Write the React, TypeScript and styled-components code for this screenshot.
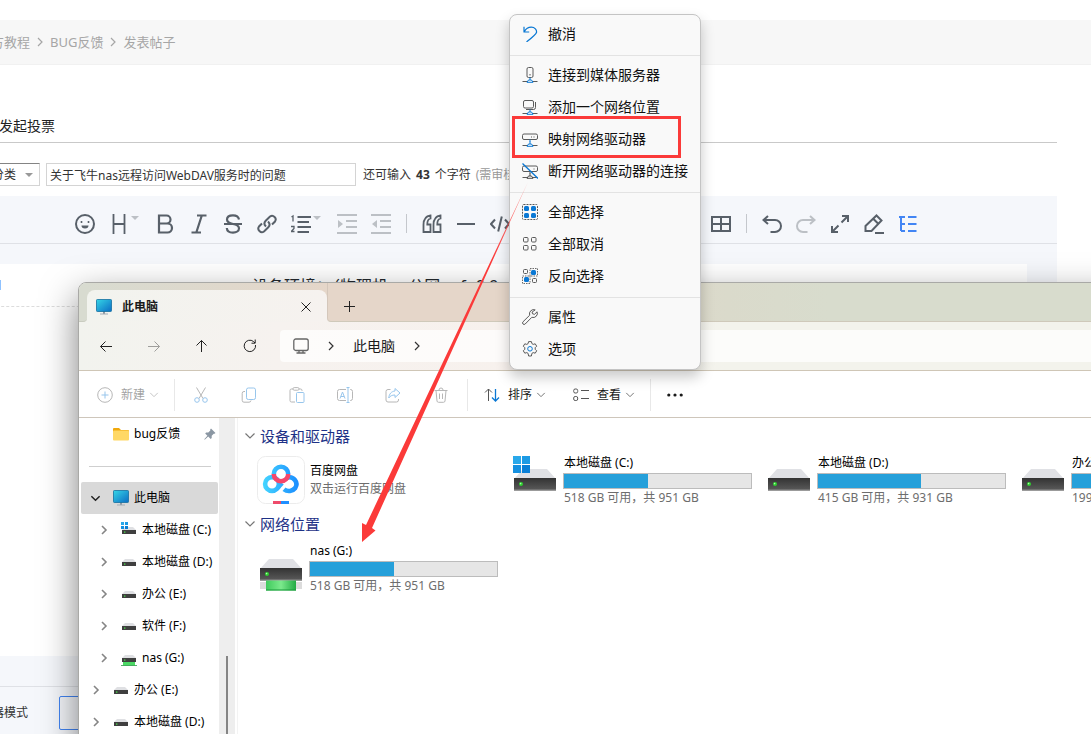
import React from "react";
import styled, { createGlobalStyle } from "styled-components";

const Global = createGlobalStyle`
  * { box-sizing: border-box; }
  body {
    margin: 0;
    background: #fff;
    overflow: hidden;
    font-family: "Noto Sans", "Noto Sans CJK SC", sans-serif;
    font-size: 12px;
    line-height: 16px;
    color: #1a1a1a;
  }
  button, input, select { font: inherit; color: inherit; }
  button { border: 0; padding: 0; margin: 0; background: none; text-align: left; }
  svg { display: block; flex: none; }
`;

/* ---------- forum page ---------- */

const Desktop = styled.div`
  position: relative;
  height: 100vh;
  overflow: hidden;
`;

const Forum = styled.main`
  display: flex;
  flex-direction: column;
  height: 100%;
  padding-top: 20px;
`;

const Crumbs = styled.nav`
  display: flex;
  align-items: center;
  gap: 4px;
  height: 45px;
  flex: none;
  margin-left: -24px;
  padding-left: 2px;
  background: #f7f7f7;
  border-bottom: 1px solid #f1f1f1;
  font-size: 13px;
  color: #a6a6a6;
  a { color: inherit; text-decoration: none; white-space: nowrap; }
`;

const PostForm = styled.form`
  flex: 1;
  display: flex;
  flex-direction: column;
  margin: 0 34px 0 -24px;
  min-height: 0;
`;

const PostTabs = styled.div`
  display: flex;
  align-items: flex-end;
  height: 78px;
  flex: none;
  padding: 0 0 7px 23px;
  border-bottom: 1px solid #c9c9c9;
  font-size: 14px;
  line-height: 18px;
  color: #222;
`;

const TitleRow = styled.div`
  display: flex;
  align-items: center;
  gap: 6px;
  padding: 20px 0 10px;
  color: #333;
`;

const CategoryBox = styled.label`
  position: relative;
  width: 64px;
  svg { position: absolute; right: 7px; top: 10px; }
`;

const Category = styled.select`
  appearance: none;
  display: block;
  width: 100%;
  height: 23px;
  padding: 0 0 0 15px;
  border: 1px solid #d4d4d4;
  border-top-color: #848484;
  border-radius: 0;
  background: #fff;
`;

const TitleInput = styled.input`
  width: 310px;
  height: 23px;
  padding: 0 3px;
  border: 1px solid #d4d4d4;
  background: #fff;
  outline: none;
`;

const Counter = styled.span`
  display: flex;
  gap: 5px;
  margin-left: 1px;
  white-space: nowrap;
  b { font-weight: 700; }
  small { font-size: 12px; color: #999; }
`;

const Tools = styled.div`
  display: flex;
  align-items: center;
  height: 48px;
  flex: none;
  padding: 8px 0 0 92px;
  background: #f5f7fb;
  border-bottom: 1px solid #dfe1e6;
`;

const Tool = styled.button<{ $wide?: boolean; $tone?: string }>`
  display: flex;
  align-items: center;
  gap: 2px;
  width: ${(p) => (p.$wide ? 46 : 34)}px;
  padding-left: 7px;
  height: 34px;
  color: ${(p) => p.$tone ?? "#586069"};
`;

const ToolRule = styled.i`
  width: 1px;
  height: 19px;
  margin: 0 8px;
  background: #c4c7cc;
`;

const ToolCaret = styled.span`
  align-self: flex-start;
  margin-top: 9px;
`;

const Canvas = styled.div`
  flex: 1;
  display: flex;
  min-height: 0;
  padding: 20px 30px 0 0;
  background: #f5f7fb;
`;

const Outline = styled.aside`
  width: 260px;
  background: #fff;
  header {
    height: 43px;
    padding: 16px 0 0 24px;
    border-bottom: 1px dashed #dcdcdc;
  }
`;

const OutlineMark = styled.i`
  display: block;
  width: 1px;
  height: 10px;
  background: #8fc2ff;
`;

const Doc = styled.article`
  flex: 1;
  padding: 10px 16px;
  background: #fff;
  font-size: 16px;
  line-height: 24px;
  color: #24292e;
  p { margin: 0; }
`;

const CountBar = styled.div`
  height: 31px;
  flex: none;
  background: #f5f7fb;
  border-bottom: 1px solid #dfe1e6;
`;

const FormFoot = styled.footer`
  display: flex;
  align-items: center;
  gap: 31px;
  height: 47px;
  flex: none;
  margin-left: -12px;
  padding: 4px 0 0 4px;
  background: #f5f7fb;
  color: #333;
`;

const ModeButton = styled.button`
  width: 90px;
  height: 34px;
  border: 1px solid #4285f4;
  border-radius: 2px;
`;

/* ---------- explorer window ---------- */

const WindowFrame = styled.div`
  position: absolute;
  left: 78px;
  right: -60px;
  top: 282px;
  bottom: -20px;
  display: flex;
  border-radius: 8px;
  box-shadow: 0 14px 36px rgba(0, 0, 0, 0.5);
`;

const Window = styled.section`
  flex: 1;
  display: flex;
  flex-direction: column;
  border: 1px solid #a9a9a6;
  border-radius: 8px;
  overflow: hidden;
  background: linear-gradient(90deg, #f2f3ee 0, #f6f2ef 200px, #f7f1ed 430px, #f3f3ec 650px);
`;

const Strip = styled.div`
  display: flex;
  height: 39px;
  flex: none;
`;

const StripEdge = styled.div`
  width: 8px;
  background: #d8dbd0;
  border-bottom: 1px solid #c9ccc0;
  border-bottom-right-radius: 4px;
`;

const TabWrap = styled.div`
  display: flex;
  width: 240px;
  padding-top: 7px;
  background: linear-gradient(90deg, #d8dbd0, #e5d6c9);
`;

const Tab = styled.div`
  flex: 1;
  display: flex;
  align-items: center;
  gap: 10px;
  padding: 1px 14px 0 9px;
  border-radius: 8px 8px 0 0;
  background: linear-gradient(90deg, #f2f3ee, #f6f2ef);
  font-weight: 600;
  button { margin-left: auto; }
`;

const StripRest = styled.div`
  flex: 1;
  display: flex;
  align-items: center;
  padding: 8px 0 0 15px;
  background: linear-gradient(90deg, #e5d6c9 180px, #dadacb 400px, #d8dccd 500px);
  border-bottom: 1px solid #cfc9ba;
  border-left: 1px solid #d4c7bb;
  border-bottom-left-radius: 4px;
`;

const NavRow = styled.div`
  display: flex;
  align-items: center;
  height: 49px;
  flex: none;
  padding-left: 3px;
  border-bottom: 1px solid #cfc6b6;
`;

const NavButton = styled.button<{ $off?: boolean }>`
  display: flex;
  justify-content: center;
  width: 48px;
  color: #222;
  opacity: ${(p) => (p.$off ? 0.4 : 1)};
`;

const Address = styled.div`
  flex: 1;
  display: flex;
  align-items: center;
  gap: 16px;
  height: 32px;
  margin: 0 8px 0 6px;
  padding-left: 13px;
  border-radius: 4px;
  background: rgba(255, 255, 255, 0.72);
  font-size: 14px;
`;

const Commands = styled.div`
  display: flex;
  align-items: center;
  height: 47px;
  flex: none;
  padding: 2px 0 0 18px;
  background: #fff;
  border-bottom: 1px solid #cec6bb;
`;

const Command = styled.button<{ $off?: boolean; $w?: number }>`
  display: flex;
  align-items: center;
  justify-content: ${(p) => (p.$w ? "flex-start" : "center")};
  gap: 8px;
  width: ${(p) => p.$w ?? 48}px;
  color: #1a1a1a;
  opacity: ${(p) => (p.$off ? 0.42 : 1)};
  span + svg { margin-left: -4px; }
`;

const CommandRule = styled.i<{ $l?: number; $r?: number }>`
  width: 1px;
  height: 32px;
  margin: 0 ${(p) => p.$r ?? 2}px 0 ${(p) => p.$l ?? 0}px;
  background: #e8e8e8;
`;

const Panes = styled.div`
  flex: 1;
  display: flex;
  min-height: 0;
  background: #fff;
`;

const Tree = styled.nav`
  width: 140px;
  flex: none;
  padding-left: 2px;
`;

const TreeRow = styled.button<{ $level: number; $on?: boolean }>`
  display: flex;
  align-items: center;
  width: 137px;
  height: 32px;
  padding-left: ${(p) => 9 + p.$level * 8}px;
  border-radius: 2px;
  background: ${(p) => (p.$on ? "#d9d9d9" : "transparent")};
  white-space: nowrap;
  color: #000;
`;

const TreeArrow = styled.span`
  width: 12px;
  margin-right: 11px;
`;

const TreeIcon = styled.span`
  width: 16px;
  margin-right: 5px;
`;

const TreePin = styled.span`
  margin-left: auto;
  margin-right: 2px;
`;

const TreeRule = styled.hr`
  height: 1px;
  margin: 16px 8px 15px;
  border: 0;
  background: #cfcfcf;
`;

const Scroll = styled.div`
  width: 16px;
  flex: none;
  padding: 238px 7px 0;
  background: #eee;
  i { display: block; width: 2px; height: 100%; background: #858585; }
`;

const Files = styled.div`
  flex: 1;
  margin-left: 2px;
  padding: 4px 0 0 6px;
  border-left: 1px solid #f3f3f3;
`;

const Group = styled.h2`
  display: flex;
  align-items: center;
  gap: 4px;
  height: 28px;
  margin: 0;
  font-size: 15px;
  font-weight: 400;
  color: #1e3287;
`;

const Tiles = styled.div`
  display: flex;
  height: 60px;
  padding-left: 13px;
`;

const Tile = styled.div`
  display: flex;
  align-items: center;
  gap: 5px;
  width: 254px;
  flex: none;
  white-space: nowrap;
`;

const TileIcon = styled.div`
  display: flex;
  justify-content: center;
  width: 48px;
  flex: none;
`;

const TileText = styled.div<{ $loose?: boolean }>`
  line-height: ${(p) => (p.$loose ? 18 : 16)}px;
  color: #000;
  small { display: block; font-size: 12px; color: #6d6d6d; }
`;

const Meter = styled.div`
  width: 189px;
  height: 16px;
  margin: 2px 0 1px -1px;
  border: 1px solid #bcbcbc;
  background: #e6e6e6;
  i { display: block; height: 100%; background: #26a0da; }
`;

/* ---------- context menu ---------- */

const Menu = styled.ul`
  position: absolute;
  left: 509px;
  top: 14px;
  width: 192px;
  margin: 0;
  padding: 3px 0 4px;
  list-style: none;
  border: 1px solid #c4c4c4;
  border-radius: 8px;
  background: #f9f9f9;
  box-shadow: 0 7px 14px rgba(0, 0, 0, 0.22);
  font-size: 14px;
`;

const MenuItem = styled.button`
  display: flex;
  align-items: center;
  gap: 10px;
  width: 100%;
  height: 32px;
  padding-left: 12px;
  white-space: nowrap;
  color: #111;
`;

const MenuRule = styled.li`
  height: 1px;
  margin: 5px 0 3px;
  background: #e3e3e3;
`;

/* ---------- annotations ---------- */

const Highlight = styled.div`
  position: absolute;
  left: 512px;
  top: 116px;
  width: 169px;
  height: 42px;
  border: 3px solid #fb3a39;
`;

const Pointer = styled.svg`
  position: absolute;
  left: 360px;
  top: 180px;
`;

/* ---------- icons ---------- */

type IconProps = { children: React.ReactNode; size?: number; sw?: number };

const Glyph = ({ children, size = 20, sw = 2 }: IconProps) => (
  <svg width={size} height={size} viewBox={`0 0 ${size} ${size}`} fill="none" stroke="currentColor" strokeWidth={sw} aria-hidden>
    {children}
  </svg>
);

const Chevron = ({ dir, size = 12, color = "#777", sw = 1.2 }: { dir: "right" | "down"; size?: number; color?: string; sw?: number }) => (
  <svg width={size} height={size} viewBox="0 0 12 12" fill="none" stroke={color} strokeWidth={sw} aria-hidden>
    <path d={dir === "right" ? "M4 2l4 4-4 4" : "M1.500 3.500l4.500 4.500 4.500-4.500"} />
  </svg>
);

const Caret = ({ color }: { color: string }) => (
  <svg width="8" height="4" viewBox="0 0 8 4" fill={color} aria-hidden>
    <path d="M0 0h8L4 4z" />
  </svg>
);

const Monitor = () => (
  <svg width="16" height="16" viewBox="0 0 16 16" aria-hidden>
    <defs>
      <linearGradient id="screen" x1="0" y1="0" x2="1" y2="1">
        <stop offset="0" stopColor="#35d6e6" />
        <stop offset="1" stopColor="#0b6cc4" />
      </linearGradient>
    </defs>
    <path d="M7 12h2v3H7z" fill="#8d98a3" />
    <path d="M4 14.500h8v1H4z" fill="#a3adb6" />
    <rect x="0.500" y="0.500" width="15" height="12" rx="0.800" fill="url(#screen)" stroke="#14709f" strokeWidth="0.800" />
  </svg>
);

const WinLogo = ({ x, y, s }: { x: number; y: number; s: number }) => {
  const q = (s - 1) / 2;
  return (
    <g>
      <rect x={x} y={y} width={q} height={q} fill="#29a8ea" />
      <rect x={x + q + 1} y={y} width={q} height={q} fill="#1c9ae4" />
      <rect x={x} y={y + q + 1} width={q} height={q} fill="#1590e0" />
      <rect x={x + q + 1} y={y + q + 1} width={q} height={q} fill="#0a7fd6" />
    </g>
  );
};

const MiniDrive = ({ win, net }: { win?: boolean; net?: boolean }) => (
  <svg width="16" height="16" viewBox="0 0 16 16" aria-hidden>
    <path d="M4 5h8l3 3H1z" fill="#dfe0e3" />
    <rect x="1" y="8" width="14" height="4" fill="#3f3f3f" />
    <rect x="3" y="9.500" width="1.400" height="1.200" fill="#4be34b" />
    {win && <WinLogo x={0} y={0} s={7} />}
    {net && (
      <>
        <rect x="2" y="12" width="12" height="3.500" fill="#4bd964" />
        <path d="M0 15.500h16" stroke="#2c9b46" strokeWidth="0.800" />
      </>
    )}
  </svg>
);

const Drive = ({ win, net }: { win?: boolean; net?: boolean }) => (
  <svg width="44" height={net ? 46 : 48} viewBox={net ? "0 1 44 46" : "0 0 44 48"} aria-hidden>
    <defs>
      <linearGradient id="face" x1="0" y1="0" x2="0" y2="1">
        <stop offset="0" stopColor="#333" />
        <stop offset="1" stopColor="#5b5b5b" />
      </linearGradient>
      <linearGradient id="pipe" x1="0" y1="0" x2="1" y2="0">
        <stop offset="0" stopColor="#3fca5c" />
        <stop offset="0.500" stopColor="#7be98c" />
        <stop offset="1" stopColor="#23ab45" />
      </linearGradient>
    </defs>
    <g transform={net ? "translate(0 2)" : undefined}>
      <path d="M10 13h24l9 10H1z" fill="#e0e1e5" />
      <rect x="1" y="22" width="42" height="12.500" fill="url(#face)" />
      <rect x="1" y="33.500" width="42" height="1" fill="#8a8a8a" />
      <circle cx="8" cy="28" r="2" fill="#2fd02f" />
      <circle cx="7.600" cy="27.600" r="0.800" fill="#aaffaa" />
    </g>
    {net && (
      <>
        <rect x="1" y="38" width="42" height="7" fill="#dcdcdc" />
        <rect x="7" y="36.500" width="30" height="10" fill="url(#pipe)" />
        <path d="M7 46h30" stroke="#189a3a" />
      </>
    )}
    {win && <WinLogo x={0} y={0} s={17} />}
  </svg>
);

const BaiduIcon = () => (
  <svg width="48" height="48" viewBox="0 0 48 48" fill="none" aria-hidden>
    <defs>
      <linearGradient id="cloud" x1="6" y1="0" x2="42" y2="0" gradientUnits="userSpaceOnUse">
        <stop offset="0" stopColor="#45d5ff" />
        <stop offset="1" stopColor="#1a8cff" />
      </linearGradient>
    </defs>
    <rect x="0.500" y="0.500" width="47" height="47" rx="8" fill="#fff" stroke="#ececec" />
    <g stroke="url(#cloud)" strokeWidth="4.600">
      <circle cx="15" cy="28" r="6.900" />
      <path d="M27 33.200c3.500 3 8.800 2 11.200-1.200a6.900 6.900 0 0 0-8-10.300" />
      <path d="M16.800 18a7.200 7.200 0 0 1 14.400 0" />
      <path d="M20.500 32l4.500-5" />
    </g>
    <path d="M16.800 18a7.200 7.200 0 0 0 14.400 0" stroke="#f5476c" strokeWidth="4.600" />
    <rect x="16" y="45" width="8" height="3" fill="#ee4b6b" />
    <rect x="24" y="45" width="8" height="3" fill="#1f8fff" />
  </svg>
);

const Folder = () => (
  <svg width="16" height="16" viewBox="0 0 16 16" aria-hidden>
    <path d="M0 3a1 1 0 0 1 1-1h5l2 2h7a1 1 0 0 1 1 1v3H0z" fill="#f0a80c" />
    <rect x="0" y="4.500" width="16" height="10" rx="1" fill="#ffd865" />
  </svg>
);

const Pin = () => (
  <svg width="12" height="12" viewBox="0 0 12 12" fill="#8b97a3" aria-hidden>
    <path d="M7 .5l4.500 4.500-1 .8-.8-.1-2 2.100v2.200l-1 .9-2.500-2.400L1 11.500.3 11.700l.2-.8 2.900-3.100L1.200 5.500l.9-1h2.200l2-2L6.200 1.400z" />
  </svg>
);

const I = {
  smile: <Glyph><circle cx="10" cy="10" r="9" /><path d="M6.500 7v2M13.500 7v2" strokeWidth="1.600" /><path d="M6.500 11.500h7a3.500 3 0 0 1-7 0z" fill="currentColor" stroke="none" /></Glyph>,
  head: <Glyph sw={1.8}><path d="M4.500 0v20M15.500 0v20M4.500 10h11" /></Glyph>,
  bold: <Glyph sw={2.2}><path d="M4 1.500h7.500a4 4 0 0 1 0 8H4zM4 9.500h8.500a4.500 4.500 0 0 1 0 9H4zM4 1v18" /></Glyph>,
  italic: <Glyph sw={2.2}><path d="M8 1.500h9.500M2.500 18.500H12M12.800 1.500l-5.500 17" /></Glyph>,
  strike: <Glyph sw={2.2}><path d="M16 5.500c-.5-3-3-4.200-6-4.200-4 0-6 2-6 4.300 0 2.900 3 3.800 6 4.400 3.500.7 6 1.700 6 4.300s-2.500 4.400-6 4.400c-3.500 0-6-1.700-6.200-4.700M1 10h18" /></Glyph>,
  link: <Glyph><path d="M9 12.500c-2-2-1.800-4.300-.3-5.800L13 2.500a3.600 3.600 0 0 1 5 5l-3 3M11 7.500c2 2 1.800 4.300.3 5.800L7 17.500a3.600 3.600 0 0 1-5-5l3-3" /></Glyph>,
  list: <Glyph><path d="M6.500 3H20M6.500 8H18M6.500 13H20M6.500 18H18" strokeWidth="1.800" /><path d="M.5 3l1.500-1v5.500M0 12.500h3v2L.3 17.500H3.500" strokeWidth="1.300" /></Glyph>,
  indent: <Glyph><path d="M0 1h20M9 7h11M9 13h11M0 19h20" /><path d="M1 6v8l5-4z" fill="currentColor" stroke="none" /></Glyph>,
  outdent: <Glyph><path d="M0 1h20M9 7h11M9 13h11M0 19h20" /><path d="M6 6v8l-5-4z" fill="currentColor" stroke="none" /></Glyph>,
  quote: <Glyph><path d="M8.500 1.500C3.500 2 1.500 6 1.500 11v7h7v-7.500H5.300C5.200 7 6.500 5 8.500 4.500zM18.500 1.500c-5 .5-7 4.500-7 9.500v7h7v-7.500h-3.200c-.1-3.500 1.200-5.500 3.200-6z" strokeWidth="1.800" /></Glyph>,
  line: <Glyph><path d="M1 10h18" /></Glyph>,
  code: <Glyph><path d="M5 5.500L1 10l4 4.500M15 5.500l4 4.500-4 4.500M11.800 2.500l-3.600 15" /></Glyph>,
  plus: <Glyph><path d="M10 3v14M3 10h14" /></Glyph>,
  table: <Glyph><rect x="1" y="3" width="18" height="14" /><path d="M1 10h18M10 3v14" /></Glyph>,
  undo: <Glyph><path d="M6 2L1.500 6 6 10M1.500 6H13a6 6 0 0 1 0 12H8.500" /></Glyph>,
  redo: <Glyph><path d="M14 2l4.500 4L14 10M18.500 6H7a6 6 0 0 0 0 12h4.500" /></Glyph>,
  full: <Glyph><path d="M12 2h6v6M18 2l-6.500 6.500M8 18H2v-6M2 18l6.500-6.500" /></Glyph>,
  edit: <Glyph><path d="M12.500 1.500l5 5L7.500 17H1.500v-5zM9.500 5l5 5M11 19h9" /></Glyph>,
  toc: <Glyph><path d="M1 3h6M3 3v14M3 10h4M3 17h4M10 3h8.500M10 10h8.500M10 17h8.500" /></Glyph>,
};

const blue = "#0a78d4";
const MIcon = ({ children }: { children: React.ReactNode }) => (
  <svg width="16" height="16" viewBox="0 0 16 16" fill="none" stroke="#5a5a5a" strokeWidth="1" aria-hidden>
    {children}
  </svg>
);
const NetFoot = ({ c = blue }: { c?: string }) => (
  <>
    <path d="M.5 14.500H5M11 14.500h4.500" />
    <path d="M5 15.300l1.500-2.300h3l1.500 2.300zM8 10.500V13" stroke={c} />
  </>
);
const M = {
  undo: <MIcon><path d="M2 .8v5.200h5.200M2.300 5.700C4 2.500 6.500 1.200 9.300 1.200c3.500 0 5.700 2.700 5.200 5.300C14 8.500 9.500 12 4.500 16" stroke={blue} strokeWidth="1.200" /></MIcon>,
  media: <MIcon><rect x="5" y=".5" width="6" height="10" rx="1.500" /><path d="M8 7v1.500" /><NetFoot /></MIcon>,
  place: <MIcon><rect x="1.500" y="1.500" width="10" height="7.500" rx="1.500" /><path d="M13.500 3v5.500a2 2 0 0 1-2 2H4" /><NetFoot /></MIcon>,
  map: <MIcon><rect x=".5" y="3" width="15" height="5.500" rx="1.500" /><path d="M12 5.500v1M9.500 5.500v1" /><path d="M8 8.500V11" stroke={blue} /><NetFoot /></MIcon>,
  cut: <MIcon><rect x=".5" y="3" width="15" height="5.500" rx="1.500" /><path d="M12 5.500v1M8 8.500V11" /><NetFoot c="#4a4a4a" /><path d="M.5.500l15.500 15" stroke={blue} strokeWidth="1.300" /></MIcon>,
  all: <MIcon><rect x=".5" y=".5" width="15" height="15" rx="1" strokeDasharray="2 1" /><g fill={blue} stroke="none"><rect x="2" y="2" width="5" height="5" rx="1.500" /><rect x="9" y="2" width="5" height="5" rx="1.500" /><rect x="2" y="9" width="5" height="5" rx="1.500" /><rect x="9" y="9" width="5" height="5" rx="1.500" /></g></MIcon>,
  none: <MIcon><rect x="1.500" y="1.500" width="4.500" height="4.500" rx="1" /><rect x="9.500" y="1.500" width="4.500" height="4.500" rx="1" /><rect x="1.500" y="9.500" width="4.500" height="4.500" rx="1" /><rect x="9.500" y="9.500" width="4.500" height="4.500" rx="1" /></MIcon>,
  invert: <MIcon><rect x="1.500" y="1.500" width="4" height="4" rx="1" /><rect x="10.500" y="10.500" width="4" height="4" rx="1" /><path d="M8 .5h7.500v7.500H8zM.5 8H8v7.500H.5z" strokeDasharray="1.500 1" strokeWidth=".9" /><rect x="9" y="2" width="5" height="5" rx="1.500" fill={blue} stroke="none" /><rect x="2" y="9" width="5" height="5" rx="1.500" fill={blue} stroke="none" /></MIcon>,
  wrench: <MIcon><path d="M13.200.9a4.200 4.200 0 0 0-5.500 5.300L1 12.800a1.500 1.500 0 0 0 2.200 2.200l6.600-6.700a4.200 4.200 0 0 0 5.300-5.500l-2.600 2.500-2-.5-.4-1.800z" /></MIcon>,
  gear: <MIcon><path d="M6.600.6h2.800l.5 2 1.300.8 2-.6 1.500 2.400-1.500 1.500v1.600l1.500 1.500-1.500 2.400-2-.6-1.300.8-.5 2.600H6.600l-.5-2.600-1.300-.8-2 .6-1.500-2.400 1.500-1.500V6.700L1.300 5.200l1.500-2.400 2 .6 1.300-.8z" strokeLinejoin="round" /><circle cx="8" cy="7.800" r="2.300" stroke={blue} /></MIcon>,
};

const CIcon = ({ children }: { children: React.ReactNode }) => (
  <svg width="16" height="16" viewBox="0 0 16 16" fill="none" stroke="#555" strokeWidth="1" aria-hidden>
    {children}
  </svg>
);
const C = {
  add: <CIcon><circle cx="8" cy="8" r="7.300" /><path d="M8 4.500v7M4.500 8h7" stroke={blue} /></CIcon>,
  cut: <CIcon><path d="M3.500.5l6.500 11M12.500.5L6 11.500" /><circle cx="4" cy="13" r="2.300" stroke={blue} /><circle cx="12" cy="13" r="2.300" stroke={blue} /></CIcon>,
  copy: <CIcon><path d="M4 4.500H3A1.800 1.800 0 0 0 1.200 6.300v7A1.800 1.800 0 0 0 3 15.200h5a2 2 0 0 0 2-1.700" /><rect x="5.500" y="1" width="9" height="11.500" rx="1.800" stroke={blue} /></CIcon>,
  paste: <CIcon><path d="M4 2H2.500A1.500 1.500 0 0 0 1 3.500v10A1.500 1.500 0 0 0 2.500 15H6M10 2h1.500A1.500 1.500 0 0 1 13 3.500V4" /><rect x="4" y=".6" width="6" height="2.600" rx="1.200" /><rect x="7.500" y="5.500" width="7.500" height="10" rx="1" stroke={blue} /></CIcon>,
  rename: <CIcon><path d="M9 2.500H2.500a2 2 0 0 0-2 2v7a2 2 0 0 0 2 2H9M13 2.500h.5a2 2 0 0 1 2 2v7a2 2 0 0 1-2 2H13" /><path d="M9.500.5h3M11 .5v15M9.500 15.500h3M3 11.500L5.500 5 8 11.500M4 9.500h3" stroke={blue} /></CIcon>,
  share: <CIcon><path d="M5.500 2.500H3a2 2 0 0 0-2 2v8.500a2 2 0 0 0 2 2h8.500a2 2 0 0 0 2-2V12" /><path d="M10 1.500l5 4.500-5 4.500V8C7 8 5 9 3.800 11 4 7 6.500 4.300 10 4z" stroke={blue} strokeLinejoin="round" /></CIcon>,
  trash: <CIcon><path d="M1.500 3.500h13M3 3.500l1 10.500a1.500 1.500 0 0 0 1.500 1.300h5A1.500 1.500 0 0 0 12 14l1-10.500M6 3a2 2 0 0 1 4 0M6.500 6.500v5.500M9.500 6.500v5.500" /></CIcon>,
  sort: <CIcon><path d="M4.500 14V2M1 5.500L4.500 2 8 5.500" /><path d="M11.500 2v12M8 10.500l3.500 3.500 3.500-3.500" stroke={blue} strokeWidth="1.300" /></CIcon>,
  view: <CIcon><rect x=".7" y="2" width="4" height="4" rx="1.500" /><rect x=".7" y="9.500" width="4" height="4" rx="1.500" /><path d="M8 3.500h8M8 11.500h8" /></CIcon>,
  more: <svg width="16" height="16" viewBox="0 0 16 16" fill="#1a1a1a" aria-hidden><circle cx="1.800" cy="8" r="1.600" /><circle cx="8" cy="8" r="1.600" /><circle cx="14.200" cy="8" r="1.600" /></svg>,
};

/* ---------- data ---------- */

type TreeEntry = { label: string; level: number; win?: boolean; net?: boolean };
const tree: TreeEntry[] = [
  { label: "本地磁盘 (C:)", level: 1, win: true },
  { label: "本地磁盘 (D:)", level: 1 },
  { label: "办公 (E:)", level: 1 },
  { label: "软件 (F:)", level: 1 },
  { label: "nas (G:)", level: 1, net: true },
  { label: "办公 (E:)", level: 0 },
  { label: "本地磁盘 (D:)", level: 0 },
];

type DriveEntry = { name: string; info: string; used: number; win?: boolean; net?: boolean };
const drives: DriveEntry[] = [
  { name: "本地磁盘 (C:)", info: "518 GB 可用，共 951 GB", used: 45, win: true },
  { name: "本地磁盘 (D:)", info: "415 GB 可用，共 931 GB", used: 55 },
  { name: "办公 (E:)", info: "199 GB 可用，共 400 GB", used: 50 },
];
const nas: DriveEntry = { name: "nas (G:)", info: "518 GB 可用，共 951 GB", used: 45, net: true };

const menuGroups: [string, React.ReactNode][][] = [
  [["撤消", M.undo]],
  [["连接到媒体服务器", M.media], ["添加一个网络位置", M.place], ["映射网络驱动器", M.map], ["断开网络驱动器的连接", M.cut]],
  [["全部选择", M.all], ["全部取消", M.none], ["反向选择", M.invert]],
  [["属性", M.wrench], ["选项", M.gear]],
];

const faint = "#bcc0c5";

const DriveTile = ({ d }: { d: DriveEntry }) => (
  <Tile>
    <TileIcon><Drive win={d.win} net={d.net} /></TileIcon>
    <TileText>
      {d.name}
      <Meter><i style={{ width: `${d.used}%` }} /></Meter>
      <small>{d.info}</small>
    </TileText>
  </Tile>
);

export default function App() {
  return (
    <Desktop>
      <Global />
      <Forum>
        <Crumbs>
          <a href="#guide">官方教程</a>
          <Chevron dir="right" color="#a6a6a6" />
          <a href="#bug">BUG反馈</a>
          <Chevron dir="right" color="#a6a6a6" />
          <a href="#post">发表帖子</a>
        </Crumbs>
        <PostForm onSubmit={(e) => e.preventDefault()}>
          <PostTabs><button type="button">发起投票</button></PostTabs>
          <TitleRow>
            <CategoryBox>
              <Category aria-label="分类" defaultValue="c"><option value="c">分类</option></Category>
              <Caret color="#999" />
            </CategoryBox>
            <TitleInput aria-label="标题" defaultValue="关于飞牛nas远程访问WebDAV服务时的问题" />
            <Counter>还可输入 <b>43</b> <span>个字符</span> <small>(需审核)</small></Counter>
          </TitleRow>
          <Tools>
            <Tool type="button" aria-label="表情">{I.smile}</Tool>
            <Tool type="button" aria-label="标题级别" $wide>{I.head}<ToolCaret><Caret color={faint} /></ToolCaret></Tool>
            <Tool type="button" aria-label="粗体">{I.bold}</Tool>
            <Tool type="button" aria-label="斜体">{I.italic}</Tool>
            <Tool type="button" aria-label="删除线">{I.strike}</Tool>
            <Tool type="button" aria-label="链接">{I.link}</Tool>
            <Tool type="button" aria-label="列表" $wide>{I.list}<ToolCaret><Caret color={faint} /></ToolCaret></Tool>
            <Tool type="button" aria-label="缩进" $tone={faint}>{I.indent}</Tool>
            <Tool type="button" aria-label="减少缩进" $tone={faint}>{I.outdent}</Tool>
            <ToolRule />
            <Tool type="button" aria-label="引用">{I.quote}</Tool>
            <Tool type="button" aria-label="分隔线">{I.line}</Tool>
            <Tool type="button" aria-label="代码块">{I.code}</Tool>
            <Tool type="button" aria-label="行内代码">{I.code}</Tool>
            <Tool type="button" aria-label="插入前">{I.plus}</Tool>
            <Tool type="button" aria-label="插入后">{I.plus}</Tool>
            <ToolRule />
            <Tool type="button" aria-label="上传">{I.plus}</Tool>
            <Tool type="button" aria-label="图片">{I.plus}</Tool>
            <Tool type="button" aria-label="表格">{I.table}</Tool>
            <ToolRule />
            <Tool type="button" aria-label="撤销">{I.undo}</Tool>
            <Tool type="button" aria-label="重做" $tone={faint}>{I.redo}</Tool>
            <Tool type="button" aria-label="全屏">{I.full}</Tool>
            <Tool type="button" aria-label="清除">{I.edit}</Tool>
            <Tool type="button" aria-label="大纲" $tone="#4285f4">{I.toc}</Tool>
          </Tools>
          <Canvas>
            <Outline><header><OutlineMark /></header></Outline>
            <Doc><p>设备环境：（物理机， 公网， fn0.9</p></Doc>
          </Canvas>
          <CountBar />
          <FormFoot>
            <span>编辑器模式</span>
            <ModeButton type="button" aria-label="切换模式" />
          </FormFoot>
        </PostForm>
      </Forum>

      <WindowFrame>
        <Window>
          <Strip>
            <StripEdge />
            <TabWrap>
              <Tab>
                <Monitor />
                <span>此电脑</span>
                <button type="button" aria-label="关闭标签页">
                  <svg width="14" height="14" viewBox="0 0 14 14" stroke="#222" aria-hidden><path d="M2.500 2.500l9 9M11.500 2.500l-9 9" /></svg>
                </button>
              </Tab>
            </TabWrap>
            <StripRest>
              <button type="button" aria-label="新标签页">
                <svg width="12" height="12" viewBox="0 0 12 12" stroke="#222" aria-hidden><path d="M6.500 1v11M1 6.500h11" /></svg>
              </button>
            </StripRest>
          </Strip>
          <NavRow>
            <NavButton type="button" aria-label="后退"><Glyph size={16} sw={1}><path d="M14 8.500H2.500M7.500 3.500l-5 5 5 5" /></Glyph></NavButton>
            <NavButton type="button" aria-label="前进" $off><Glyph size={16} sw={1}><path d="M2 8.500h11.500M8.500 3.500l5 5-5 5" /></Glyph></NavButton>
            <NavButton type="button" aria-label="向上"><Glyph size={16} sw={1}><path d="M7.500 14V2.500M2.500 7.500l5-5 5 5" /></Glyph></NavButton>
            <NavButton type="button" aria-label="刷新"><Glyph size={16} sw={1}><path d="M13.500 7A5.700 5.700 0 1 1 11.500 3.500L13 5M13.200 1.500V5.200H9.500" /></Glyph></NavButton>
            <Address>
              <svg width="16" height="16" viewBox="0 0 16 16" fill="none" stroke="#666" strokeWidth="1.300" aria-hidden>
                <rect x=".8" y="1" width="14.400" height="11.500" rx="2" /><path d="M6 12.500v2M10 12.500v2M3.500 15h9" />
              </svg>
              <Chevron dir="right" color="#333" />
              <span>此电脑</span>
              <Chevron dir="right" color="#333" />
            </Address>
          </NavRow>
          <Commands>
            <Command type="button" $off $w={77}>{C.add}<span>新建</span><Chevron dir="down" size={10} /></Command>
            <CommandRule />
            <Command type="button" aria-label="剪切" $off>{C.cut}</Command>
            <Command type="button" aria-label="复制" $off>{C.copy}</Command>
            <Command type="button" aria-label="粘贴" $off>{C.paste}</Command>
            <Command type="button" aria-label="重命名" $off>{C.rename}</Command>
            <Command type="button" aria-label="共享" $off>{C.share}</Command>
            <Command type="button" aria-label="删除" $off>{C.trash}</Command>
            <CommandRule $l={2} $r={16} />
            <Command type="button" $w={89}>{C.sort}<span>排序</span><Chevron dir="down" size={10} /></Command>
            <Command type="button" $w={77}>{C.view}<span>查看</span><Chevron dir="down" size={10} /></Command>
            <CommandRule $r={0} />
            <Command type="button" aria-label="更多">{C.more}</Command>
          </Commands>
          <Panes>
            <Tree>
              <TreeRow type="button" $level={0}>
                <TreeArrow />
                <TreeIcon><Folder /></TreeIcon>
                <span>bug反馈</span>
                <TreePin><Pin /></TreePin>
              </TreeRow>
              <TreeRule />
              <TreeRow type="button" $level={0} $on>
                <TreeArrow><Chevron dir="down" color="#222" sw={1.6} size={11} /></TreeArrow>
                <TreeIcon><Monitor /></TreeIcon>
                <span>此电脑</span>
              </TreeRow>
              {tree.map((t, i) => (
                <TreeRow type="button" key={i} $level={t.level}>
                  <TreeArrow><Chevron dir="right" color="#858585" sw={1.6} /></TreeArrow>
                  <TreeIcon><MiniDrive win={t.win} net={t.net} /></TreeIcon>
                  <span>{t.label}</span>
                </TreeRow>
              ))}
            </Tree>
            <Scroll><i /></Scroll>
            <Files>
              <Group><Chevron dir="down" />设备和驱动器</Group>
              <Tiles>
                <Tile>
                  <TileIcon><BaiduIcon /></TileIcon>
                  <TileText $loose>百度网盘<small>双击运行百度网盘</small></TileText>
                </Tile>
                {drives.map((d) => <DriveTile key={d.name} d={d} />)}
              </Tiles>
              <Group><Chevron dir="down" />网络位置</Group>
              <Tiles><DriveTile d={nas} /></Tiles>
            </Files>
          </Panes>
        </Window>
      </WindowFrame>

      <Menu role="menu">
        {menuGroups.map((g, i) => (
          <React.Fragment key={i}>
            {i > 0 && <MenuRule role="separator" />}
            {g.map(([label, icon]) => (
              <li key={label} role="none"><MenuItem type="button" role="menuitem">{icon}<span>{label}</span></MenuItem></li>
            ))}
          </React.Fragment>
        ))}
      </Menu>

      <Highlight />
      <Pointer width="172" height="366" viewBox="360 180 172 366" aria-hidden>
        <defs>
          <linearGradient id="shaft" x1="0" y1="180" x2="0" y2="260" gradientUnits="userSpaceOnUse">
            <stop offset="0" stopColor="#fb3a39" stopOpacity="0.500" />
            <stop offset="1" stopColor="#fb3a39" />
          </linearGradient>
        </defs>
        <path d="M528 182L366 525l-4-2v19l13.500-11.500-3.500-2.500z" fill="url(#shaft)" />
      </Pointer>
    </Desktop>
  );
}
